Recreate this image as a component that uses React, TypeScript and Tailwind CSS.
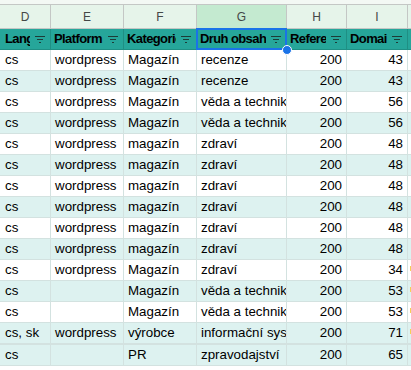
import React from 'react';

type Row = { lang: string; platform: string; cat: string; kind: string; ref: number; dom: number; alt: boolean; mark?: boolean; tall?: boolean };

const rows: Row[] = [
  { lang: 'cs', platform: 'wordpress', cat: 'Magazín', kind: 'recenze', ref: 200, dom: 43, alt: false },
  { lang: 'cs', platform: 'wordpress', cat: 'Magazín', kind: 'recenze', ref: 200, dom: 43, alt: true },
  { lang: 'cs', platform: 'wordpress', cat: 'Magazín', kind: 'věda a technika', ref: 200, dom: 56, alt: false },
  { lang: 'cs', platform: 'wordpress', cat: 'Magazín', kind: 'věda a technika', ref: 200, dom: 56, alt: true },
  { lang: 'cs', platform: 'wordpress', cat: 'magazín', kind: 'zdraví', ref: 200, dom: 48, alt: false },
  { lang: 'cs', platform: 'wordpress', cat: 'magazín', kind: 'zdraví', ref: 200, dom: 48, alt: true },
  { lang: 'cs', platform: 'wordpress', cat: 'magazín', kind: 'zdraví', ref: 200, dom: 48, alt: false },
  { lang: 'cs', platform: 'wordpress', cat: 'magazín', kind: 'zdraví', ref: 200, dom: 48, alt: true },
  { lang: 'cs', platform: 'wordpress', cat: 'magazín', kind: 'zdraví', ref: 200, dom: 48, alt: false },
  { lang: 'cs', platform: 'wordpress', cat: 'magazín', kind: 'zdraví', ref: 200, dom: 48, alt: true },
  { lang: 'cs', platform: 'wordpress', cat: 'Magazín', kind: 'zdraví', ref: 200, dom: 34, alt: false, mark: true },
  { lang: 'cs', platform: '', cat: 'Magazín', kind: 'věda a technika', ref: 200, dom: 53, alt: true, mark: true },
  { lang: 'cs', platform: '', cat: 'Magazín', kind: 'věda a technika', ref: 200, dom: 53, alt: false, mark: true },
  { lang: 'cs, sk', platform: 'wordpress', cat: 'výrobce', kind: 'informační systémy', ref: 200, dom: 71, alt: true, mark: true, tall: true },
  { lang: 'cs', platform: '', cat: 'PR', kind: 'zpravodajství', ref: 200, dom: 65, alt: true },
];

const cols = 'grid grid-cols-[51px_73px_73px_90px_60px_61px_4px]';

function FilterIcon() {
  return (
    <div className="absolute right-0 top-0 flex h-full w-[20px] items-center pl-[5px]">
      <svg width="10" height="8" viewBox="0 0 10 8">
        <rect x="0" y="1" width="10" height="1" fill="#1d3b37" />
        <rect x="2" y="4" width="6" height="1" fill="#1d3b37" />
        <rect x="4" y="7" width="2" height="1" fill="#1d3b37" />
      </svg>
    </div>
  );
}

function HeadCell({ label, first }: { label: string; first?: boolean }) {
  return (
    <div className={`relative h-[21px] border-r border-b border-[#1f8f84] bg-[#26a69a] ${first ? 'pl-[5px]' : 'pl-[3px]'} pr-[20px] text-[13px] font-bold leading-[20px] tracking-[-0.6px] text-black`}>
      <div className="overflow-hidden whitespace-nowrap">{label}</div>
      <FilterIcon />
    </div>
  );
}

export default function App() {
  const letters = ['D', 'E', 'F', 'G', 'H', 'I'];
  const cell = 'overflow-hidden whitespace-nowrap border-r border-[#d3e2e0] leading-[20px]';
  return (
    <div className="relative h-[370px] w-[411px] overflow-hidden bg-white text-[13.33px] text-black" style={{ fontFamily: '"Liberation Sans", Arial, sans-serif' }}>
      <div className="h-[5px] border-b border-[#c4c7c5] bg-[#f3f8f4]" />
      <div className={cols}>
        {letters.map((l) => (
          <div key={l} className={`flex h-[24px] items-center justify-center border-r border-b border-[#c4c7c5] text-[12px] text-[#444746] ${l === 'G' ? 'bg-[#c4ead0]' : 'bg-[#e6f4ea]'}`}>
            {l}
          </div>
        ))}
        <div className="h-[24px] border-b border-[#c4c7c5] bg-[#e6f4ea]" />
      </div>
      <div className={`${cols} relative`}>
        <HeadCell label="Language" first />
        <HeadCell label="Platform" />
        <HeadCell label="Kategorie" />
        <HeadCell label="Druh obsahu" />
        <HeadCell label="Referenční" />
        <HeadCell label="Domain rating" />
        <div className="h-[21px] border-b border-[#1f8f84] bg-[#26a69a]" />
        <div className="pointer-events-none absolute top-[-1px] left-[196px] h-[22px] w-[91px] border-2 border-[#1a73e8]" />
        <div className="absolute top-[16px] left-[282px] h-[10px] w-[10px] rounded-full border border-white bg-[#1a73e8]" />
      </div>
      {rows.map((r, i) => (
        <div key={i} className={`${cols} ${r.alt ? 'bg-[#ddf2f0]' : 'bg-white'} ${r.tall ? 'h-[22px] border-b-2' : 'h-[21px] border-b'} border-[#d3e2e0]`}>
          <div className={`${cell} pl-[5px]`}>{r.lang}</div>
          <div className={`${cell} pl-[4px]`}>{r.platform}</div>
          <div className={`${cell} pl-[4px]`}>{r.cat}</div>
          <div className={`${cell} pl-[4px]`}>{r.kind}</div>
          <div className={`${cell} pr-[4px] text-right`}>{r.ref}</div>
          <div className={`${cell} pr-[4px] text-right`}>{r.dom}</div>
          <div className="pl-[2px] pt-[6px]">
            {r.mark && <div className="h-[5px] w-[2px] bg-[#f6cf57]" />}
          </div>
        </div>
      ))}
    </div>
  );
}
